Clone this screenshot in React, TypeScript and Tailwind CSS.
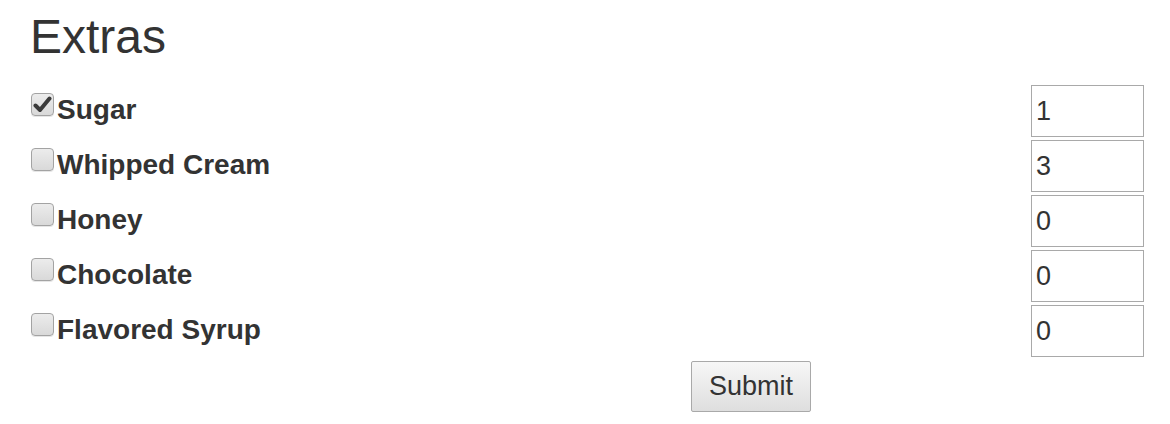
import { useState } from 'react';

const extras = [
  { name: 'Sugar', qty: '1', checked: true },
  { name: 'Whipped Cream', qty: '3', checked: false },
  { name: 'Honey', qty: '0', checked: false },
  { name: 'Chocolate', qty: '0', checked: false },
  { name: 'Flavored Syrup', qty: '0', checked: false },
];

function Check({ on, onClick }: { on: boolean; onClick: () => void }) {
  return (
    <button
      type="button"
      onClick={onClick}
      className="w-[23px] h-[23px] shrink-0 rounded-[4px] border border-[#a3a3a3] bg-gradient-to-b from-[#ececec] to-[#d9d9d9] flex items-center justify-center shadow-[0_1px_0_#e6e6e6]"
    >
      {on && (
        <svg width="19" height="17" viewBox="0 0 19 17">
          <path d="M2.5 9.5 L7 14 L16.5 2.5" fill="none" stroke="#3a3a3a" strokeWidth="4" strokeLinecap="round" strokeLinejoin="round" />
        </svg>
      )}
    </button>
  );
}

export default function App() {
  const [items, setItems] = useState(extras);

  const toggle = (i: number) => {
    setItems(items.map((it, j) => (j === i ? { ...it, checked: !it.checked } : it)));
  };

  return (
    <div className="min-h-screen bg-white text-[#333] pl-[29px] pr-[26px] font-['Liberation_Sans',Arial,sans-serif]">
      <h1 className="text-[48px] leading-[54px] pt-[10px] mb-[21px] ml-[1px]">Extras</h1>
      <form onSubmit={(e) => e.preventDefault()}>
        {items.map((it, i) => (
          <div key={it.name} className="flex items-start justify-between h-[52px] mb-[3px]">
            <div className="flex items-start">
              <div className="ml-[2px] mr-[3px] mt-[8px]">
                <Check on={it.checked} onClick={() => toggle(i)} />
              </div>
              <label className="text-[28px] leading-[32px] mt-[9px] font-bold">{it.name}</label>
            </div>
            <input
              defaultValue={it.qty}
              className="w-[113px] h-[52px] border border-[#a9a9a9] px-[4px] text-[27px] text-[#333] outline-none"
            />
          </div>
        ))}
        <div className="pl-[662px] pt-[1px]">
          <button
            type="submit"
            className="w-[120px] h-[51px] border border-[#a9a9a9] rounded-[2px] bg-gradient-to-b from-[#f7f7f7] to-[#dedede] text-[27px] text-[#333]"
          >
            Submit
          </button>
        </div>
      </form>
    </div>
  );
}
